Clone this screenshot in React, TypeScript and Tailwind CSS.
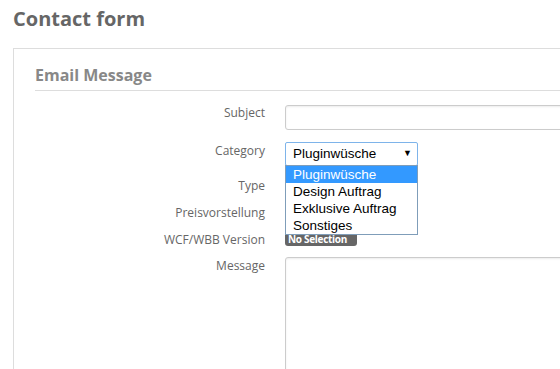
export default function App() {
  const options = ['Pluginwüsche', 'Design Auftrag', 'Exklusive Auftrag', 'Sonstiges']

  return (
    <div className="w-[560px] h-[369px] overflow-hidden bg-white font-['Open_Sans',sans-serif]">
      <h1 className="pl-[13px] pt-[4px] text-[20px] leading-[30px] font-bold text-[#666]">Contact form</h1>

      <div className="ml-[13px] mt-[14px] w-[700px] h-[400px] border border-[#ddd] pl-[21px] pt-[14px]">
        <h2 className="text-[16px] leading-[24px] font-bold text-[#888] pb-[3px] border-b border-[#ddd]">Email Message</h2>

        <div className="relative pt-[14px]">
          {/* Subject */}
          <div className="flex items-start gap-[20px]">
            <label className="w-[230px] text-right text-[12px] leading-[16px] text-[#666]">Subject</label>
            <div className="w-[400px] h-[25px] border border-[#ccc] rounded-[3px] shadow-[inset_0_1px_2px_rgba(0,0,0,0.08)]" />
          </div>

          {/* Category */}
          <div className="flex items-start gap-[20px] mt-[12px]">
            <label className="w-[230px] text-right text-[12px] leading-[16px] text-[#666] pt-[1px]">Category</label>
            <div className="w-[133px] h-[24px] border border-[#7eb4ea] rounded-[2px] flex items-center justify-between pl-[7px] pr-[5px] font-['Liberation_Sans',Arial,sans-serif] text-[13.5px] text-black">
              <span>Pluginwüsche</span>
              <span className="text-[9px]">▼</span>
            </div>
          </div>

          {/* Type */}
          <div className="flex items-start gap-[20px] mt-[12px]">
            <label className="w-[230px] text-right text-[12px] leading-[16px] text-[#666]">Type</label>
          </div>

          {/* Preisvorstellung */}
          <div className="flex items-start gap-[20px] mt-[11px]">
            <label className="w-[230px] text-right text-[12px] leading-[16px] text-[#666]">Preisvorstellung</label>
          </div>

          {/* WCF/WBB Version */}
          <div className="flex items-start gap-[20px] mt-[11px]">
            <label className="w-[230px] text-right text-[12px] leading-[16px] text-[#666]">WCF/WBB Version</label>
            <span className="mt-[-2px] h-[16px] w-[72px] overflow-hidden whitespace-nowrap bg-[#666] rounded-[3px] text-white text-[10px] leading-[18px] font-bold px-[3px] tracking-[-0.3px]">No Selection</span>
          </div>

          {/* Message */}
          <div className="flex items-start gap-[20px] mt-[10px]">
            <label className="w-[230px] text-right text-[12px] leading-[16px] text-[#666]">Message</label>
            <div className="mt-[-1px] w-[400px] h-[200px] border border-[#ccc] rounded-[3px] shadow-[inset_0_1px_2px_rgba(0,0,0,0.08)]" />
          </div>

          {/* open dropdown list */}
          <ul className="absolute left-[250px] top-[74px] w-[133px] bg-white border border-[#7f9db9] font-['Liberation_Sans',Arial,sans-serif] text-[13.5px] leading-[17px] text-black">
            {options.map((o, i) => (
              <li key={o} className={i === 0 ? 'bg-[#3399ff] text-white pl-[7px]' : 'pl-[7px]'}>{o}</li>
            ))}
          </ul>
        </div>
      </div>
    </div>
  )
}
